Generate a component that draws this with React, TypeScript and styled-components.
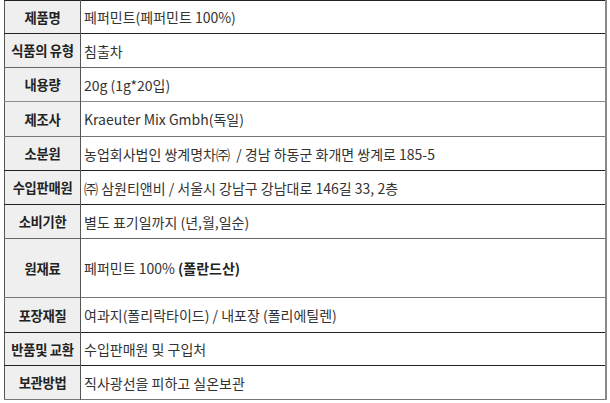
import React from 'react'
import styled, { createGlobalStyle } from 'styled-components'

const GlobalStyle = createGlobalStyle`
  html, body {
    margin: 0;
    padding: 0;
    background: #ffffff;
  }
  body {
    font-family: 'Noto Sans CJK KR', 'Noto Sans', sans-serif;
  }
`

const Wrapper = styled.div`
  padding: 0 3px 0 4px;
  width: 603px;
`

const Table = styled.table`
  width: 603px;
  border-collapse: collapse;
  table-layout: fixed;
  border-right: 2px solid #8a8a8a;
  border-left: 1px solid #555;
  border-bottom: 1px solid #777;
`

const Row = styled.tr<{ $line: string; $height: number }>`
  height: ${(p) => p.$height}px;
  border-top: 1px solid ${(p) => p.$line};
`

const Label = styled.th`
  width: 75px;
  background-color: #efefef;
  color: #222;
  font-size: 13.3px;
  font-weight: 700;
  text-align: center;
  padding: 0;
  border-right: 1px solid #555;
  white-space: nowrap;
  letter-spacing: -0.3px;
`

const Value = styled.td`
  color: #333;
  font-size: 14px;
  font-weight: 400;
  text-align: left;
  padding: 0 0 0 3px;
  white-space: pre;
`

const Strong = styled.b`
  font-weight: 700;
  color: #222;
`

interface Item {
  label: string
  value: React.ReactNode
  line: string
  height: number
}

const items: Item[] = [
  { label: '제품명', value: '페퍼민트(페퍼민트 100%)', line: '#222', height: 33 },
  { label: '식품의 유형', value: '침출차', line: '#222', height: 34 },
  { label: '내용량', value: '20g (1g*20입)', line: '#666', height: 34 },
  { label: '제조사', value: 'Kraeuter Mix Gmbh(독일)', line: '#8c8c8c', height: 35 },
  {
    label: '소분원',
    value: '농업회사법인 쌍계명차㈜  / 경남 하동군 화개면 쌍계로 185-5',
    line: '#777',
    height: 34,
  },
  {
    label: '수입판매원',
    value: '㈜ 삼원티앤비 / 서울시 강남구 강남대로 146길 33, 2층',
    line: '#222',
    height: 34,
  },
  { label: '소비기한', value: '별도 표기일까지 (년,월,일순)', line: '#222', height: 34 },
  {
    label: '원재료',
    value: (
      <>
        페퍼민트 100% <Strong>(폴란드산)</Strong>
      </>
    ),
    line: '#666',
    height: 59,
  },
  {
    label: '포장재질',
    value: '여과지(폴리락타이드) / 내포장 (폴리에틸렌)',
    line: '#777',
    height: 35,
  },
  { label: '반품및 교환', value: '수입판매원 및 구입처', line: '#222', height: 33 },
  { label: '보관방법', value: '직사광선을 피하고 실온보관', line: '#222', height: 34 },
]

export default function App() {
  return (
    <>
      <GlobalStyle />
      <Wrapper>
        <Table>
          <tbody>
            {items.map((item) => (
              <Row key={item.label} $line={item.line} $height={item.height}>
                <Label>{item.label}</Label>
                <Value>{item.value}</Value>
              </Row>
            ))}
          </tbody>
        </Table>
      </Wrapper>
    </>
  )
}
